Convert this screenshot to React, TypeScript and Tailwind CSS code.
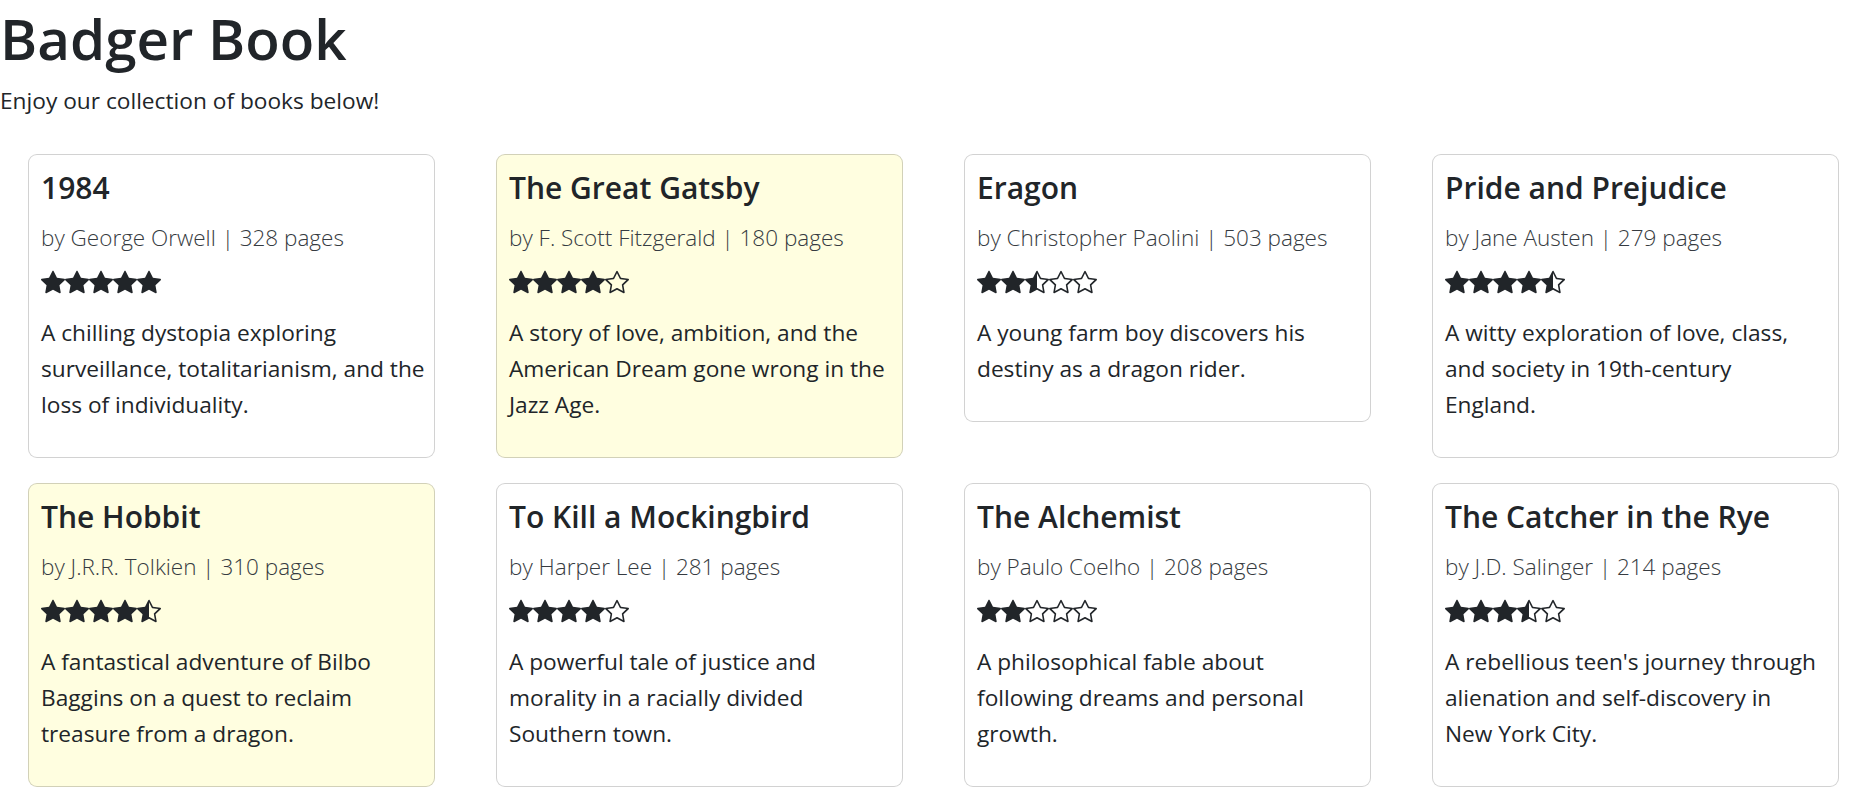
const books = [
  {
    title: "1984",
    author: "George Orwell",
    pages: 328,
    rating: 5,
    description: [
      "A chilling dystopia exploring",
      "surveillance, totalitarianism, and the",
      "loss of individuality.",
    ],
    favorite: false,
  },
  {
    title: "The Great Gatsby",
    author: "F. Scott Fitzgerald",
    pages: 180,
    rating: 4,
    description: [
      "A story of love, ambition, and the",
      "American Dream gone wrong in the",
      "Jazz Age.",
    ],
    favorite: true,
  },
  {
    title: "Eragon",
    author: "Christopher Paolini",
    pages: 503,
    rating: 2.5,
    description: ["A young farm boy discovers his", "destiny as a dragon rider."],
    favorite: false,
  },
  {
    title: "Pride and Prejudice",
    author: "Jane Austen",
    pages: 279,
    rating: 4.5,
    description: [
      "A witty exploration of love, class,",
      "and society in 19th-century",
      "England.",
    ],
    favorite: false,
  },
  {
    title: "The Hobbit",
    author: "J.R.R. Tolkien",
    pages: 310,
    rating: 4.5,
    description: [
      "A fantastical adventure of Bilbo",
      "Baggins on a quest to reclaim",
      "treasure from a dragon.",
    ],
    favorite: true,
  },
  {
    title: "To Kill a Mockingbird",
    author: "Harper Lee",
    pages: 281,
    rating: 4,
    description: [
      "A powerful tale of justice and",
      "morality in a racially divided",
      "Southern town.",
    ],
    favorite: false,
  },
  {
    title: "The Alchemist",
    author: "Paulo Coelho",
    pages: 208,
    rating: 2,
    description: [
      "A philosophical fable about",
      "following dreams and personal",
      "growth.",
    ],
    favorite: false,
  },
  {
    title: "The Catcher in the Rye",
    author: "J.D. Salinger",
    pages: 214,
    rating: 3.5,
    description: [
      "A rebellious teen's journey through",
      "alienation and self-discovery in",
      "New York City.",
    ],
    favorite: false,
  },
];

const STAR_FILL =
  "M3.612 15.443c-.386.198-.824-.149-.746-.592l.83-4.73L.173 6.765c-.329-.314-.158-.888.283-.95l4.898-.696L7.538.792c.197-.39.73-.39.927 0l2.184 4.327 4.898.696c.441.062.612.636.282.95l-3.522 3.356.83 4.73c.078.443-.36.79-.746.592L8 13.187l-4.389 2.256z";
const STAR_EMPTY =
  "M2.866 14.85c-.078.444.36.791.746.593l4.39-2.256 4.389 2.256c.386.198.824-.149.746-.592l-.83-4.73 3.522-3.356c.33-.314.16-.888-.282-.95l-4.898-.696L8.465.792a.513.513 0 0 0-.927 0L5.354 5.12l-4.898.696c-.441.062-.612.636-.283.95l3.523 3.356-.83 4.73zm4.905-2.767-3.686 1.894.694-3.957a.565.565 0 0 0-.163-.505L1.71 6.745l4.052-.576a.525.525 0 0 0 .393-.288L8 2.223l1.847 3.658a.525.525 0 0 0 .393.288l4.052.575-2.906 2.77a.565.565 0 0 0-.163.506l.694 3.957-3.686-1.894a.503.503 0 0 0-.461 0z";
const STAR_HALF =
  "M5.354 5.119 7.538.792A.516.516 0 0 1 8 .5c.183 0 .366.097.465.292l2.184 4.327 4.898.696A.537.537 0 0 1 16 6.32a.548.548 0 0 1-.17.445l-3.523 3.356.83 4.73c.078.443-.36.79-.746.592L8 13.187l-4.389 2.256a.52.52 0 0 1-.146.05c-.342.06-.668-.254-.6-.642l.83-4.73L.173 6.765a.55.55 0 0 1-.172-.403.58.58 0 0 1 .085-.302.513.513 0 0 1 .37-.245l4.898-.696zM8 12.027a.5.5 0 0 1 .232.056l3.686 1.894-.694-3.957a.565.565 0 0 1 .162-.505l2.907-2.77-4.052-.576a.525.525 0 0 1-.393-.288L8.001 2.223 8 2.226v9.8z";

function Stars({ rating }: { rating: number }) {
  const stars = [];
  for (let i = 1; i <= 5; i++) {
    let d = STAR_EMPTY;
    if (rating >= i) d = STAR_FILL;
    else if (rating >= i - 0.5) d = STAR_HALF;
    stars.push(
      <svg
        key={i}
        viewBox="0 0 16 16"
        width="24"
        height="24"
        fill="currentColor"
        className="block"
      >
        <path d={d} />
      </svg>
    );
  }
  return <div className="flex mt-[14px] h-[24px]">{stars}</div>;
}

function BookCard({ book }: { book: (typeof books)[number] }) {
  return (
    <div
      className={`border border-[rgba(0,0,0,0.175)] rounded-[9px] p-[12px] ${
        book.favorite ? "bg-[#fffee0]" : "bg-white"
      }`}
    >
      <h5 className="text-[30px] font-semibold leading-[42px]">{book.title}</h5>
      <p className="mt-[11px] text-[22.5px] font-light leading-[36px] text-[#363b41]">
        by {book.author} | {book.pages} pages
      </p>
      <Stars rating={book.rating} />
      <p className="mt-[21px] mb-[22px] text-[22.7px] leading-[36px]">
        {book.description.map((line) => (
          <span key={line} className="block whitespace-nowrap">
            {line}
          </span>
        ))}
      </p>
    </div>
  );
}

export default function App() {
  return (
    <div className="min-h-screen bg-white text-[#212529] font-['Open_Sans',sans-serif]">
      <h1 className="text-[56.5px] font-semibold leading-[78px]">Badger Book</h1>
      <p className="mt-[5px] text-[22.7px] leading-[36px]">
        Enjoy our collection of books below!
      </p>
      <div className="mt-[35px] grid grid-cols-4 items-start gap-x-[61px] gap-y-[25px] pl-[28px] pr-[30px]">
        {books.map((book) => (
          <BookCard key={book.title} book={book} />
        ))}
      </div>
    </div>
  );
}
